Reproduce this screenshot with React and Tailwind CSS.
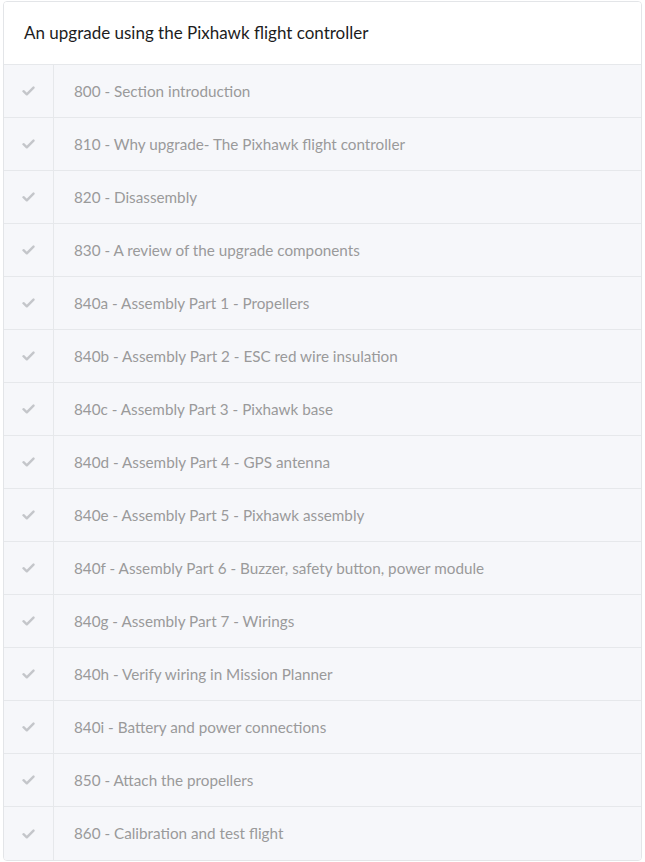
import React from 'react';

const lectures = [
  '800 - Section introduction',
  '810 - Why upgrade- The Pixhawk flight controller',
  '820 - Disassembly',
  '830 - A review of the upgrade components',
  '840a - Assembly Part 1 - Propellers',
  '840b - Assembly Part 2 - ESC red wire insulation',
  '840c - Assembly Part 3 - Pixhawk base',
  '840d - Assembly Part 4 - GPS antenna',
  '840e - Assembly Part 5 - Pixhawk assembly',
  '840f - Assembly Part 6 - Buzzer, safety button, power module',
  '840g - Assembly Part 7 - Wirings',
  '840h - Verify wiring in Mission Planner',
  '840i - Battery and power connections',
  '850 - Attach the propellers',
  '860 - Calibration and test flight',
];

function Check() {
  return (
    <svg width="13" height="10" viewBox="0 0 13 10" fill="none">
      <path d="M1.5 5.2 L4.8 8.3 L11.5 1.6" stroke="#c4c6ca" strokeWidth="2.4" strokeLinecap="round" strokeLinejoin="round" />
    </svg>
  );
}

export default function App() {
  return (
    <div className="bg-white w-[645px] h-[862px] pt-px px-[3px]" style={{ fontFamily: 'Lato, "Open Sans", sans-serif' }}>
      <div className="border border-[#e3e5e8] rounded-[4px] overflow-hidden">
        <div className="h-[63px] flex items-center px-5 bg-white border-b border-[#e6e8eb]">
          <span className="text-[17px] text-[#1d1d1d]">An upgrade using the Pixhawk flight controller</span>
        </div>
        {lectures.map((t, i) => (
          <div
            key={t}
            className={`flex h-[53px] bg-[#f6f7fa] ${i < lectures.length - 1 ? 'border-b border-[#e6e8eb]' : ''}`}
          >
            <div className="w-[50px] flex items-center justify-center border-r border-[#e6e8eb]">
              <Check />
            </div>
            <div className="flex items-center pl-[20px] text-[15.25px] text-[#9a9a9a]">{t}</div>
          </div>
        ))}
      </div>
    </div>
  );
}
